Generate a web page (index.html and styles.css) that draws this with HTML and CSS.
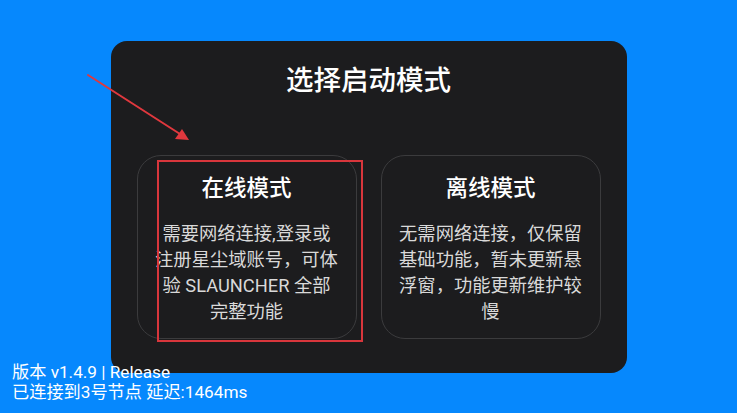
FILE: index.html
```html
<!DOCTYPE html>
<html lang="zh-CN">
<head>
<meta charset="utf-8">
<title>选择启动模式</title>
<link rel="stylesheet" href="styles.css">
</head>
<body>
<div class="screen">
  <div class="dialog">
    <h1 class="dialog-title">选择启动模式</h1>
    <div class="cards">
      <div class="card">
        <div class="card-title">在线模式</div>
        <div class="card-desc">需要网络连接,登录或注册星尘域账号，可体验 SLAUNCHER 全部完整功能</div>
        <div class="highlight"></div>
      </div>
      <div class="card">
        <div class="card-title">离线模式</div>
        <div class="card-desc">无需网络连接，仅保留基础功能，暂未更新悬浮窗，功能更新维护较慢</div>
      </div>
    </div>
  </div>
  <div class="status">
    <div>版本 v1.4.9 | Release</div>
    <div>已连接到3号节点 延迟:1464ms</div>
  </div>
  <svg class="arrow" width="737" height="413" viewBox="0 0 737 413">
    <line x1="88" y1="75" x2="180" y2="134" stroke="#e0383e" stroke-width="2" stroke-linecap="round"/>
    <polygon points="189,140 175,139 182,129" fill="#e0383e"/>
  </svg>
</div>
</body>
</html>
```
FILE: styles.css
```css
* { box-sizing: border-box; }
html, body {
  margin: 0;
  padding: 0;
  width: 737px;
  height: 413px;
  overflow: hidden;
}
body {
  background: #0688fd;
  font-family: Roboto, "Noto Sans CJK SC", sans-serif;
  color: #fff;
}
.screen {
  position: relative;
  width: 737px;
  height: 413px;
  display: flex;
  align-items: center;
  justify-content: center;
}
.dialog {
  width: 516px;
  height: 332px;
  background: #1c1c1e;
  border-radius: 16px;
  display: flex;
  flex-direction: column;
  align-items: center;
  padding-top: 23px;
}
.dialog-title {
  margin: 0;
  font-size: 27.5px;
  line-height: 34px;
  font-weight: 500;
  color: #fff;
}
.cards {
  display: flex;
  gap: 24px;
  margin-top: 57px;
}
.card {
  position: relative;
  width: 220px;
  height: 184px;
  border: 1px solid #3b3b3d;
  border-radius: 24px;
  padding: 17px 17px 0;
  display: flex;
  flex-direction: column;
  align-items: center;
}
.card-title {
  font-size: 22.5px;
  line-height: 30px;
  font-weight: 500;
  color: #fff;
}
.card-desc {
  width: 184px;
  margin-top: 18px;
  font-size: 18.3px;
  line-height: 26px;
  color: #d9d9d9;
  text-align: center;
}
.highlight {
  position: absolute;
  left: 19px;
  top: 4px;
  width: 206px;
  height: 182px;
  border: 2px solid #d8363c;
}
.status {
  position: absolute;
  left: 12px;
  bottom: 11px;
  font-size: 17.2px;
  line-height: 20px;
  color: #fff;
}
.arrow {
  position: absolute;
  left: 0;
  top: 0;
  pointer-events: none;
}
```
